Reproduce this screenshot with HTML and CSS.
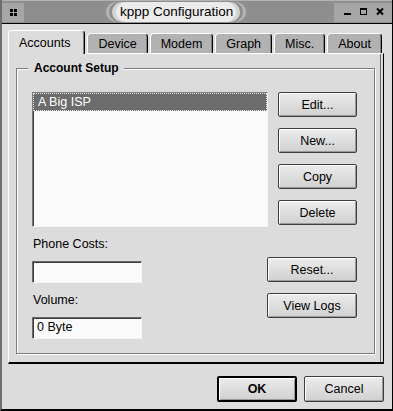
FILE: index.html
```html
<!DOCTYPE html>
<html lang="en">
<head>
  <meta charset="UTF-8">
  <title>kppp Configuration</title>
  <link rel="stylesheet" href="styles.css">
</head>
<body>
  <div class="window">
    <div class="titlebar">
      <div class="tb-menu">
        <svg width="7" height="7" viewBox="0 0 7 7">
          <rect x="0" y="0" width="3" height="3" fill="#000"/>
          <rect x="4" y="0" width="3" height="3" fill="#000"/>
          <rect x="0" y="4" width="3" height="3" fill="#000"/>
          <rect x="4" y="4" width="3" height="3" fill="#000"/>
        </svg>
      </div>
      <div class="tb-title">
        <span class="ring ring-outer"><span class="ring ring-gap"><span class="ring ring-inner"><span class="tb-text">kppp Configuration</span></span></span></span>
      </div>
      <div class="tb-buttons">
        <svg width="8" height="8" viewBox="0 0 8 8"><rect x="0" y="5" width="7" height="2" fill="#000"/></svg>
        <svg width="8" height="8" viewBox="0 0 8 8"><rect x="0.5" y="0.5" width="6" height="6" fill="none" stroke="#000"/><rect x="0" y="0" width="7" height="2" fill="#000"/></svg>
        <svg width="8" height="8" viewBox="0 0 8 8"><path d="M1 0.5 L7 6.5 M7 0.5 L1 6.5" stroke="#000" stroke-width="2"/></svg>
      </div>
    </div>

    <div class="client">
      <div class="tabs">
        <div class="tab active">Accounts</div>
        <div class="tab">Device</div>
        <div class="tab">Modem</div>
        <div class="tab">Graph</div>
        <div class="tab">Misc.</div>
        <div class="tab">About</div>
      </div>

      <div class="panel">
        <fieldset class="group">
          <legend>Account Setup</legend>

          <div class="account-row">
            <div class="listbox">
              <div class="list-item selected">A Big ISP</div>
            </div>
            <div class="btn-col">
              <button class="btn">Edit...</button>
              <button class="btn">New...</button>
              <button class="btn">Copy</button>
              <button class="btn">Delete</button>
            </div>
          </div>

          <div class="cost-row">
            <div class="fields">
              <label class="field-label">Phone Costs:</label>
              <div class="field"></div>
              <label class="field-label">Volume:</label>
              <div class="field">0 Byte</div>
            </div>
            <div class="btn-col wide">
              <button class="btn">Reset...</button>
              <button class="btn">View Logs</button>
            </div>
          </div>
        </fieldset>
      </div>

      <div class="dialog-buttons">
        <button class="btn btn-default">OK</button>
        <button class="btn">Cancel</button>
      </div>
    </div>
  </div>
</body>
</html>
```

FILE: styles.css
```css
* {
  box-sizing: border-box;
  font-family: 'Liberation Sans', Arial, sans-serif;
}

body {
  margin: 0;
  background: #dcdcdc;
}

.window {
  width: 393px;
  height: 411px;
  display: flex;
  flex-direction: column;
  background: #dcdcdc;
  border-left: 2px solid #6e6e6e;
  border-right: 1px solid #000;
  border-bottom: 2px solid #000;
}

/* title bar */
.titlebar {
  height: 24px;
  display: flex;
  align-items: center;
  background: #8e8e8e;
  border-top: 1px solid #b4b4b4;
  border-bottom: 1px solid #000;
}

.tb-menu {
  width: 22px;
  height: 19px;
  display: flex;
  align-items: center;
  justify-content: center;
  background: #a6a6a6;
}

.tb-title {
  margin-left: 82px;
  display: flex;
}

.ring {
  display: flex;
  align-items: center;
  height: 20px;
  border-radius: 10px;
}

.ring-outer {
  padding: 0 3px;
  background: #b4b4b4;
}

.ring-gap {
  padding: 0 3px;
  background: #8e8e8e;
}

.ring-inner {
  padding: 0 4px;
  background: #d4d4d4;
}

.tb-text {
  height: 20px;
  line-height: 20px;
  padding: 0 3px 0 4px;
  background: #ececec;
  border-radius: 10px;
  font-size: 13.5px;
  color: #000;
}

.tb-buttons {
  margin-left: auto;
  width: 58px;
  height: 19px;
  display: flex;
  align-items: center;
  gap: 8px;
  padding-left: 10px;
  background: #a6a6a6;
}

/* dialog body */
.client {
  flex: 1;
  display: flex;
  flex-direction: column;
  padding: 6px 8px 6px 6px;
}

.tabs {
  height: 23px;
  display: flex;
  align-items: flex-end;
  gap: 2px;
}

.tab {
  height: 20px;
  display: flex;
  align-items: center;
  padding: 0 10px;
  font-size: 12.5px;
  color: #000;
  background: #b2b2b2;
  border: 1px solid #fff;
  border-right-color: #000;
  border-bottom: none;
  border-radius: 4px 4px 0 0;
  box-shadow: inset -1px 0 0 #808080;
}

.tab.active {
  height: 24px;
  margin-bottom: -1px;
  padding: 0 14px 0 10px;
  background: #dcdcdc;
  position: relative;
  z-index: 1;
}

.panel {
  width: 376px;
  border-top: 1px solid #fff;
  border-left: 1px solid #fff;
  border-right: 1px solid #000;
  border-bottom: 2px solid #000;
  box-shadow: inset -2px 0 0 #dcdcdc, inset -3px 0 0 #6a6a6a;
  padding: 7px 0 8px 7px;
}

.group {
  margin: 0;
  width: 359px;
  padding: 16px 17px 14px 15px;
  border: 1px solid #7c7c7c;
  box-shadow: 1px 1px 0 #fff, inset 1px 1px 0 #fff;
}

.group legend {
  margin-left: -4px;
  padding: 0 5px 0 6px;
  line-height: 15px;
  font-size: 12px;
  font-weight: bold;
  background: #dcdcdc;
}

.account-row {
  display: flex;
  gap: 10px;
}

.listbox {
  width: 236px;
  height: 135px;
  background: #fbfbfb;
  border: 1px solid;
  border-color: #7a7a7a #f4f4f4 #f4f4f4 #7a7a7a;
  box-shadow: inset 1px 1px 0 #3c3c3c;
}

.list-item {
  height: 18px;
  line-height: 16px;
  padding-left: 4px;
  font-size: 12.5px;
}

.list-item.selected {
  background: #6c6c6c;
  color: #fff;
  border: 1px dotted #e8e8e8;
}

.btn-col {
  width: 79px;
  display: flex;
  flex-direction: column;
  gap: 11px;
}

.btn-col.wide {
  width: 90px;
  padding-top: 20px;
}

.btn {
  height: 25px;
  padding: 0;
  font-size: 12.5px;
  color: #000;
  background: linear-gradient(#ececec, #d0d0d0);
  border: 1px solid #3e3e3e;
  border-radius: 2px;
  box-shadow: inset 1px 1px 0 #fff, inset -1px -1px 0 #9a9a9a;
  cursor: pointer;
}

.cost-row {
  display: flex;
  justify-content: space-between;
  margin-top: 10px;
}

.fields {
  display: flex;
  flex-direction: column;
}

.field-label {
  line-height: 15px;
  font-size: 12.5px;
  color: #000;
  padding-left: 1px;
}

.field {
  width: 110px;
  height: 22px;
  margin: 9px 0 10px;
  padding-left: 4px;
  line-height: 19px;
  font-size: 12.5px;
  background: #fbfbfb;
  border: 1px solid;
  border-color: #6a6a6a #f4f4f4 #f4f4f4 #6a6a6a;
  box-shadow: inset 1px 1px 0 #3c3c3c;
}

.field:last-child {
  margin-bottom: 0;
}

.dialog-buttons {
  margin-top: 12px;
  display: flex;
  justify-content: flex-end;
  gap: 7px;
}

.dialog-buttons .btn {
  width: 80px;
  height: 26px;
}

.btn-default {
  font-weight: bold;
  border: 2px solid #000;
}
```
